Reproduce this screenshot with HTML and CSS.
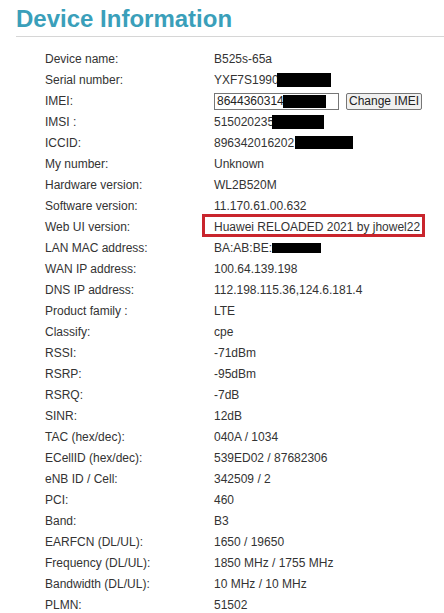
FILE: index.html
```html
<!DOCTYPE html>
<html>
<head>
<meta charset="utf-8">
<title>Device Information</title>
<link rel="stylesheet" href="styles.css">
</head>
<body>
<div class="page">
  <h1 class="title">Device Information</h1>
  <div class="info">
    <div class="lbl">Device name:</div><div class="val">B525s-65a</div>
    <div class="lbl">Serial number:</div><div class="val">YXF7S1990<span class="redact r-serial"></span></div>
    <div class="lbl">IMEI:</div>
    <div class="val imei-row">
      <span class="imei-input">8644360314<span class="redact r-imei"></span></span>
      <span class="btn">Change IMEI</span>
    </div>
    <div class="lbl">IMSI :</div><div class="val">515020235<span class="redact r-imsi"></span></div>
    <div class="lbl">ICCID:</div><div class="val">896342016202<span class="redact r-iccid"></span></div>
    <div class="lbl">My number:</div><div class="val">Unknown</div>
    <div class="lbl">Hardware version:</div><div class="val">WL2B520M</div>
    <div class="lbl">Software version:</div><div class="val">11.170.61.00.632</div>
    <div class="lbl">Web UI version:</div><div class="val highlight">Huawei RELOADED 2021 by jhowel22</div>
    <div class="lbl">LAN MAC address:</div><div class="val">BA:AB:BE:<span class="redact r-mac"></span></div>
    <div class="lbl">WAN IP address:</div><div class="val">100.64.139.198</div>
    <div class="lbl">DNS IP address:</div><div class="val">112.198.115.36,124.6.181.4</div>
    <div class="lbl">Product family :</div><div class="val">LTE</div>
    <div class="lbl">Classify:</div><div class="val">cpe</div>
    <div class="lbl">RSSI:</div><div class="val">-71dBm</div>
    <div class="lbl">RSRP:</div><div class="val">-95dBm</div>
    <div class="lbl">RSRQ:</div><div class="val">-7dB</div>
    <div class="lbl">SINR:</div><div class="val">12dB</div>
    <div class="lbl">TAC (hex/dec):</div><div class="val">040A / 1034</div>
    <div class="lbl">ECellID (hex/dec):</div><div class="val">539ED02 / 87682306</div>
    <div class="lbl">eNB ID / Cell:</div><div class="val">342509 / 2</div>
    <div class="lbl">PCI:</div><div class="val">460</div>
    <div class="lbl">Band:</div><div class="val">B3</div>
    <div class="lbl">EARFCN (DL/UL):</div><div class="val">1650 / 19650</div>
    <div class="lbl">Frequency (DL/UL):</div><div class="val">1850 MHz / 1755 MHz</div>
    <div class="lbl">Bandwidth (DL/UL):</div><div class="val">10 MHz / 10 MHz</div>
    <div class="lbl">PLMN:</div><div class="val">51502</div>
  </div>
</div>
</body>
</html>
```

FILE: styles.css
```css
html, body {
  margin: 0;
  padding: 0;
  background: #ffffff;
}

.page {
  padding-left: 16px;
  font-family: "Liberation Sans", Arial, sans-serif;
  color: #333333;
}

.title {
  margin: 0;
  padding: 5px 0 3px 0;
  font-size: 24px;
  line-height: 28px;
  font-weight: bold;
  color: #3a9fba;
  border-bottom: 1px solid #d6d6d6;
}

.info {
  display: grid;
  grid-template-columns: 169px 1fr;
  grid-auto-rows: 21px;
  margin-top: 12px;
  padding-left: 29px;
  font-size: 12px;
  line-height: 21px;
}

.lbl,
.val {
  white-space: nowrap;
}

.redact {
  display: inline-block;
  background: #000000;
}

.r-serial {
  width: 54px;
  height: 14px;
  margin-left: -2px;
  vertical-align: -3px;
}

.r-imsi {
  width: 52px;
  height: 14px;
  margin-left: -2px;
  vertical-align: -3px;
}

.r-iccid {
  width: 58px;
  height: 13px;
  margin-left: 1px;
  vertical-align: -2px;
}

.r-mac {
  width: 49px;
  height: 10px;
  vertical-align: -1px;
}

.imei-row {
  display: flex;
  align-items: center;
  gap: 7px;
}

.imei-input {
  display: flex;
  align-items: center;
  box-sizing: border-box;
  width: 125px;
  height: 17px;
  padding-left: 2px;
  border: 1px solid #767676;
  line-height: 15px;
  color: #222222;
}

.r-imei {
  width: 43px;
  height: 13px;
  margin-left: -1px;
}

.btn {
  box-sizing: border-box;
  height: 17px;
  padding: 0 2px;
  border: 1px solid #767676;
  border-radius: 2px;
  background: #f0f0f0;
  line-height: 15px;
  color: #222222;
}

.highlight {
  position: relative;
}

.highlight::after {
  content: "";
  position: absolute;
  left: -12px;
  top: -3px;
  width: 223px;
  height: 23px;
  box-sizing: border-box;
  border: 3px solid #c9252d;
}
```
